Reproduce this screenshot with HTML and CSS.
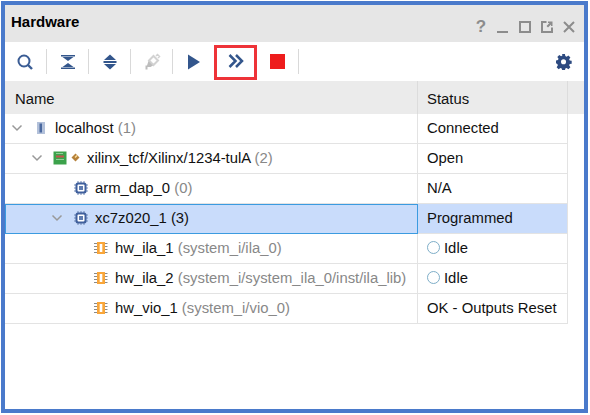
FILE: index.html
```html
<!DOCTYPE html>
<html lang="en">

<head>
    <meta charset="UTF-8">
    <meta name="viewport" content="width=device-width, initial-scale=1.0">
    <title>Hardware</title>
    <link rel="stylesheet" href="styles.css">
</head>

<body>
    <div class="window">
        <header class="titlebar">
            <h1>Hardware</h1>
            <div class="win-btns">
                <span class="help">?</span>
                <svg width="14" height="14" viewBox="0 0 14 14"><path d="M1 12h11" class="win-line"/></svg>
                <svg width="14" height="14" viewBox="0 0 14 14"><path d="M2 2h10v10H2z" class="win-line"/></svg>
                <svg width="14" height="14" viewBox="0 0 14 14"><path d="M6.500 2H2v10h10V7.500" class="win-line"/><path d="M8 1.500h4.500V6h-1.500V4.500L8 7.500 6.500 6l3-3H8z" fill="#8c8c8c"/></svg>
                <svg width="14" height="14" viewBox="0 0 14 14"><path d="M2 2l10 10M12 2L2 12" class="win-line"/></svg>
            </div>
        </header>

        <div class="toolbar">
            <div class="tool tool-first sep">
                <svg width="18" height="18" viewBox="0 0 18 18"><circle cx="8" cy="8" r="5.500" fill="none" stroke="#3a5c94" stroke-width="2"/><path d="M12 12l4 4" stroke="#3a5c94" stroke-width="2.400"/></svg>
            </div>
            <div class="tool sep">
                <svg width="18" height="18" viewBox="0 0 18 18"><path d="M2 2h14v1.500H2zM3.500 4h11L9 8zM9 10l5.500 4h-11zM2 14.500h14V16H2z" fill="#33568c"/></svg>
            </div>
            <div class="tool sep">
                <svg width="18" height="18" viewBox="0 0 18 18"><path d="M9 1.500l6 5.500H3zM2.500 8h13v2h-13zM3 11h12l-6 5.500z" fill="#33568c"/></svg>
            </div>
            <div class="tool sep">
                <svg width="18" height="18" viewBox="0 0 18 18"><path d="M10.500 3l4.500 4.500-4.500 4.500L6 7.500z" fill="none" stroke="#d2d2d2" stroke-width="2"/><path d="M13 3l1.500-1.500 2 2L15 5" fill="none" stroke="#d2d2d2" stroke-width="1.500"/><path d="M5.500 8l4.500 4.500-2.500 1.500H4.500v2.500H2.500V12.500h1.500z" fill="#bdbdbd"/></svg>
            </div>
            <div class="tool tool-play">
                <svg width="18" height="18" viewBox="0 0 18 18"><path d="M3 1.500l12 7.500-12 7.500z" fill="#33568c"/></svg>
            </div>
            <div class="tool tool-marked">
                <svg width="18" height="18" viewBox="0 0 18 18"><path d="M2.500 3l6 6-6 6M9 3l6 6-6 6" fill="none" stroke="#33568c" stroke-width="2.500"/></svg>
            </div>
            <div class="tool tool-stop sep">
                <svg width="15" height="15" viewBox="0 0 15 15"><path d="M0 0h15v15H0z" fill="#ee1c1c"/></svg>
            </div>
            <div class="tool tool-gear">
                <svg width="16" height="16" viewBox="0 0 16 16"><path fill-rule="evenodd" fill="#2d4a80" d="M6.500 0h3l.4 2.200 1.400.6L13.200 1.500l2.100 2.100-1.300 1.900.6 1.400 2.100.4v3l-2.100.4-.6 1.400 1.300 1.900-2.100 2.100-1.900-1.300-1.400.6-.4 2.100h-3l-.4-2.100-1.400-.6-1.900 1.300-2.100-2.100 1.300-1.900-.6-1.400L0 9.800v-3l2.100-.4.6-1.400-1.300-1.900 2.100-2.100 1.900 1.300 1.400-.6zM8 5.500a2.700 2.700 0 1 0 0 5.400 2.700 2.700 0 0 0 0-5.400z" transform="scale(.94)"/></svg>
            </div>
        </div>

        <div class="tree">
            <div class="row head">
                <div class="cell name">Name</div>
                <div class="cell status">Status</div>
                <div class="cell rest"></div>
            </div>

            <div class="row">
                <div class="cell name lvl-0">
                    <svg class="arrow" width="12" height="12" viewBox="0 0 12 12"><path d="M1.500 3.500L6 8l4.500-4.500" /></svg>
                    <svg class="ico" width="14" height="14" viewBox="0 0 14 14"><path d="M3 1h8v12H3z" fill="#b3c1da"/><path d="M5.500 2.500h2.500v9H5.500z" fill="#4a689f"/></svg>
                    <span>localhost <em>(1)</em></span>
                </div>
                <div class="cell status">Connected</div>
            </div>

            <div class="row">
                <div class="cell name lvl-1">
                    <svg class="arrow" width="12" height="12" viewBox="0 0 12 12"><path d="M1.500 3.500L6 8l4.500-4.500" /></svg>
                    <svg class="ico" width="14" height="14" viewBox="0 0 14 14"><path d="M.500.500h13v13H.500z" fill="#3ca24b"/><path d="M3 2.500h7M3 8.500h8" fill="none" stroke="#8fcf98" stroke-width="1"/><path d="M3 4.500h8v2H3z" fill="#c4544f"/></svg>
                    <svg class="ico-small" width="9" height="9" viewBox="0 0 9 9"><path d="M4.500.500l4 4-4 4-4-4z" fill="#b5813a"/><path d="M3.500 4l2-2 1 1-2 2z" fill="#ffdf9a"/></svg>
                    <span>xilinx_tcf/Xilinx/1234-tulA <em>(2)</em></span>
                </div>
                <div class="cell status">Open</div>
            </div>

            <div class="row">
                <div class="cell name lvl-2">
                    <svg class="ico" width="14" height="14" viewBox="0 0 14 14"><use href="#chip"/></svg>
                    <span>arm_dap_0 <em>(0)</em></span>
                </div>
                <div class="cell status">N/A</div>
            </div>

            <div class="row selected">
                <div class="cell name lvl-2b">
                    <svg class="arrow" width="12" height="12" viewBox="0 0 12 12"><path d="M1.500 3.500L6 8l4.500-4.500" /></svg>
                    <svg class="ico" width="14" height="14" viewBox="0 0 14 14"><use href="#chip"/></svg>
                    <span>xc7z020_1 (3)</span>
                </div>
                <div class="cell status">Programmed</div>
            </div>

            <div class="row">
                <div class="cell name lvl-3">
                    <svg class="ico" width="14" height="14" viewBox="0 0 14 14"><use href="#core"/></svg>
                    <span>hw_ila_1 <em>(system_i/ila_0)</em></span>
                </div>
                <div class="cell status"><i class="idle"></i>Idle</div>
            </div>

            <div class="row">
                <div class="cell name lvl-3">
                    <svg class="ico" width="14" height="14" viewBox="0 0 14 14"><use href="#core"/></svg>
                    <span>hw_ila_2 <em>(system_i/system_ila_0/inst/ila_lib)</em></span>
                </div>
                <div class="cell status"><i class="idle"></i>Idle</div>
            </div>

            <div class="row">
                <div class="cell name lvl-3">
                    <svg class="ico" width="14" height="14" viewBox="0 0 14 14"><use href="#core"/></svg>
                    <span>hw_vio_1 <em>(system_i/vio_0)</em></span>
                </div>
                <div class="cell status">OK - Outputs Reset</div>
            </div>
        </div>
    </div>

    <!-- shared icons -->
    <svg class="defs" width="0" height="0">
        <defs>
            <g id="chip">
                <path d="M4 0v14M7 0v14M10 0v14M0 4h14M0 7h14M0 10h14" stroke="#6f88b5" stroke-width="1"/>
                <rect x="1.500" y="1.500" width="11" height="11" rx="2.500" fill="#3f5f9c"/>
                <rect x="3.500" y="3.500" width="7" height="7" rx="1" fill="#fff"/>
                <rect x="5" y="5" width="4" height="4" fill="#5f7cb0"/>
            </g>
            <g id="core">
                <path d="M0 2.500h13.500M0 5.500h13.500M0 8.500h13.500M0 11.500h13.500" stroke="#8a8a8a" stroke-width="1"/>
                <rect x="3" y="1" width="8" height="12" fill="#f9a63a"/>
                <rect x="5.700" y="3" width="2.600" height="8" fill="#fff"/>
            </g>
        </defs>
    </svg>
</body>

</html>
```

FILE: styles.css
```css
* {
    box-sizing: border-box;
}
body {
    margin: 0;
    background: #fff;
    font-family: "Liberation Sans", Arial, sans-serif;
    font-size: 14.85px;
    color: #111;
}
.defs {
    position: absolute;
}
.window {
    margin: 1px 0 0 1px;
    width: 587px;
    height: 412px;
    border: 4px solid #4a7acb;
    background: #fff;
}

/* title bar */
.titlebar {
    height: 37px;
    background: #e6e6e6;
    display: flex;
    align-items: flex-start;
    justify-content: space-between;
    padding: 8px 8px 0 6px;
}
.titlebar h1 {
    margin: 0;
    font-size: 15px;
    line-height: 18px;
    font-weight: bold;
    color: #000;
}
.win-btns {
    display: flex;
    gap: 8px;
    padding-top: 7px;
}
.win-line {
    fill: none;
    stroke: #8c8c8c;
    stroke-width: 2;
}
.help {
    width: 14px;
    height: 14px;
    line-height: 14px;
    text-align: center;
    font-size: 17px;
    font-weight: bold;
    color: #8c8c8c;
}

/* toolbar */
.toolbar {
    height: 39px;
    display: flex;
    background: #fff;
}
.tool {
    width: 42px;
    height: 39px;
    display: flex;
    align-items: center;
    justify-content: center;
}
.tool-first {
    padding-right: 2px;
}
.tool-play {
    width: 41px;
}
.tool-stop {
    padding-right: 2px;
}
.sep {
    position: relative;
}
.sep::after {
    content: "";
    position: absolute;
    right: 0;
    top: 7px;
    height: 25px;
    width: 1px;
    background: #d9d9d9;
}
.tool-marked {
    width: 43px;
    height: 35px;
    margin-top: 3px;
    padding-bottom: 3px;
    outline: 3px solid #ee3338;
    outline-offset: -3px;
}
.tool-gear {
    margin-left: auto;
    width: 40px;
}

/* tree table */
.tree {
    width: 579px;
}
.row {
    display: grid;
    grid-template-columns: 413px 150px;
    height: 30px;
}
.row.head {
    grid-template-columns: 413px 150px 1fr;
    height: 33px;
    background: #ebebeb;
}
.cell {
    display: flex;
    align-items: center;
    white-space: nowrap;
    border-bottom: 1px solid #e3e3e3;
    border-right: 1px solid #e3e3e3;
    padding: 0 0 2px 9px;
}
.head .cell {
    border-bottom: 0;
    border-right-color: #dcdcdc;
    padding-bottom: 0;
    padding-top: 2px;
}
.head .name {
    padding-left: 10px;
}
.head .rest {
    border-right: 0;
}
.selected .status {
    background: #c9dcfb;
}
.selected .name {
    background: #c9dcfb;
    border: 1px solid #3b9be0;
}
em {
    font-style: normal;
    color: #888;
}

/* tree indents */
.arrow {
    fill: none;
    stroke: #999;
    stroke-width: 1.500;
    flex: none;
    margin-right: 11px;
}
.ico {
    flex: none;
    margin-right: 7px;
}
.lvl-0 {
    padding-left: 6px;
}
.lvl-1 {
    padding-left: 26px;
}
.lvl-1 .arrow {
    margin-right: 10px;
}
.lvl-1 .ico {
    margin-right: 4px;
}
.ico-small {
    flex: none;
    margin-right: 7px;
}
.lvl-2 {
    padding-left: 69px;
}
.lvl-2b {
    padding-left: 45px;
}
.lvl-3 {
    padding-left: 89px;
}
.idle {
    width: 13px;
    height: 13px;
    border: 1px solid #7eaec8;
    border-radius: 50%;
    margin-right: 4px;
    background: #fff;
}
```
